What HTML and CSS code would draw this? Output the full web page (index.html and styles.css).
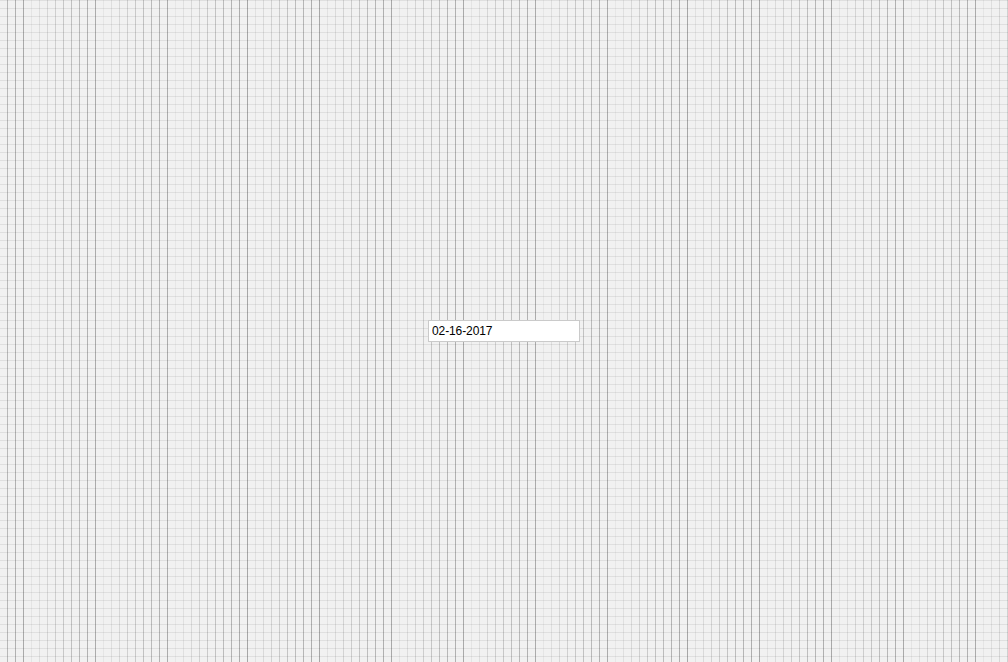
FILE: index.html
```html
<!DOCTYPE html>
<html lang="en">
<head>
<meta charset="utf-8">
<title>Date input</title>
<link rel="stylesheet" href="styles.css">
</head>
<body>
<main class="page">
  <input class="date-field" type="text" value="02-16-2017" aria-label="Date">
</main>
</body>
</html>
```
FILE: styles.css
```css
html, body {
  margin: 0;
  padding: 0;
}

body {
  background-color: #f1f1f1;
  background-image:
    repeating-linear-gradient(180deg, rgba(0, 0, 0, 0.075) 0 1px, transparent 1px 8px),
    repeating-linear-gradient(90deg, #f1f1f1 0 7px, transparent 7px 8px),
    repeating-linear-gradient(90deg, #e7e7e7 28px, #a6a6a6 101.333px);
  font-family: "Liberation Sans", Arial, sans-serif;
}

.page {
  min-height: 100vh;
  display: flex;
  align-items: center;
  justify-content: center;
}

.date-field {
  box-sizing: border-box;
  width: 152px;
  height: 22px;
  margin: 0;
  padding: 0 3px;
  border: 1px solid #cacaca;
  border-radius: 0;
  background: #ffffff;
  color: #000000;
  font-family: "Liberation Sans", Arial, sans-serif;
  font-size: 12px;
  letter-spacing: -0.1px;
  outline: none;
}
```
